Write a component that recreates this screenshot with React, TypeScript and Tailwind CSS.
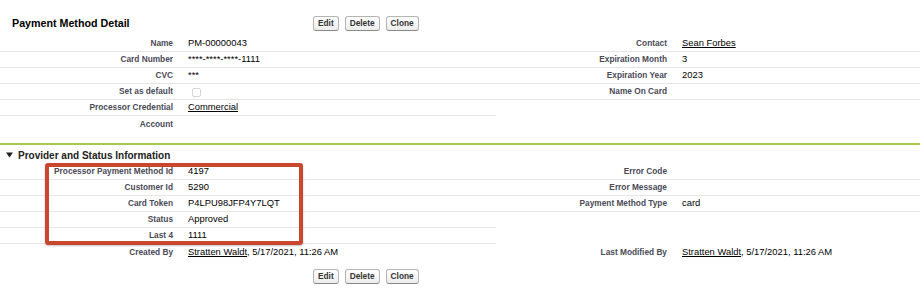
import React from 'react';

type Cell = { label: string; value?: React.ReactNode; line?: boolean };
type Row = [Cell, Cell];

const font = { fontFamily: '"Liberation Sans", Arial, sans-serif' };

function Btn({ children }: { children: React.ReactNode }) {
  return (
    <button className="h-[15px] rounded-[3px] border border-[#b5b5b5] border-b-[#8a8a8a] bg-gradient-to-b from-white to-[#ececec] px-[4px] text-[8.3px] font-bold leading-none text-[#333]">
      {children}
    </button>
  );
}

function Buttons() {
  return (
    <div className="flex gap-[6px]">
      <Btn>Edit</Btn>
      <Btn>Delete</Btn>
      <Btn>Clone</Btn>
    </div>
  );
}

function Link({ children }: { children: React.ReactNode }) {
  return <span className="text-black underline underline-offset-[1px]">{children}</span>;
}

function Pair({ cell }: { cell: Cell }) {
  const line = cell.line ? 'border-b border-[#e6e6e6]' : '';
  return (
    <>
      <div className={`flex h-[16px] items-center justify-end pr-[10px] text-[8.3px] font-bold text-[#4a4a56] ${line}`}>
        {cell.label}
      </div>
      <div className={`flex h-[16px] items-center pl-[5px] text-[9.4px] text-black ${line}`}>
        {cell.value}
      </div>
    </>
  );
}

function Grid({ rows }: { rows: Row[] }) {
  return (
    <div className="grid grid-cols-[183px_313px_181px_243px]">
      {rows.map((r, i) => (
        <React.Fragment key={i}>
          <Pair cell={r[0]} />
          <Pair cell={r[1]} />
        </React.Fragment>
      ))}
    </div>
  );
}

const detail: Row[] = [
  [{ label: 'Name', value: 'PM-00000043', line: true }, { label: 'Contact', value: <Link>Sean Forbes</Link>, line: true }],
  [{ label: 'Card Number', value: '****-****-****-1111', line: true }, { label: 'Expiration Month', value: '3', line: true }],
  [{ label: 'CVC', value: '***', line: true }, { label: 'Expiration Year', value: '2023', line: true }],
  [
    { label: 'Set as default', value: <span className="mt-[2px] ml-[4px] block h-[9px] w-[9px] rounded-[2px] border border-[#d6d6d6] bg-white" />, line: true },
    { label: 'Name On Card', line: true },
  ],
  [{ label: 'Processor Credential', value: <Link>Commercial</Link>, line: true }, { label: '' }],
  [{ label: 'Account' }, { label: '' }],
];

const provider: Row[] = [
  [{ label: 'Processor Payment Method Id', value: '4197', line: true }, { label: 'Error Code', line: true }],
  [{ label: 'Customer Id', value: '5290', line: true }, { label: 'Error Message', line: true }],
  [{ label: 'Card Token', value: 'P4LPU98JFP4Y7LQT', line: true }, { label: 'Payment Method Type', value: 'card', line: true }],
  [{ label: 'Status', value: 'Approved', line: true }, { label: '' }],
  [{ label: 'Last 4', value: '1111', line: true }, { label: '' }],
  [
    { label: 'Created By', value: <span><Link>Stratten Waldt</Link>, 5/17/2021, 11:26 AM</span> },
    { label: 'Last Modified By', value: <span><Link>Stratten Waldt</Link>, 5/17/2021, 11:26 AM</span> },
  ],
];

export default function App() {
  return (
    <div className="relative h-[290px] w-[920px] overflow-hidden bg-white" style={font}>
      {/* Header */}
      <div className="flex h-[36px] items-center pt-[10px]">
        <h2 className="w-[313px] pl-[12px] text-[10.7px] font-bold text-black">Payment Method Detail</h2>
        <Buttons />
      </div>

      <Grid rows={detail} />

      {/* Section header */}
      <div className="mt-[11px] border-t-2 border-[#a8c84a]">
        <div className="flex h-[19px] items-center gap-[5px] pl-[6px] pt-[1px]">
          <svg width="7" height="6" viewBox="0 0 7 6">
            <path d="M0 0.5 H7 L3.5 5.5 Z" fill="#222" />
          </svg>
          <span className="text-[10px] font-bold text-[#222]">Provider and Status Information</span>
        </div>
      </div>

      <Grid rows={provider} />

      <div className="mt-[9px] pl-[313px]">
        <Buttons />
      </div>

      {/* Highlight box */}
      <div className="absolute left-[45px] top-[163px] h-[82px] w-[258px] rounded-[3px] border-4 border-[#c9472f] shadow-[0_1px_2px_rgba(0,0,0,0.25)]" />
    </div>
  );
}
